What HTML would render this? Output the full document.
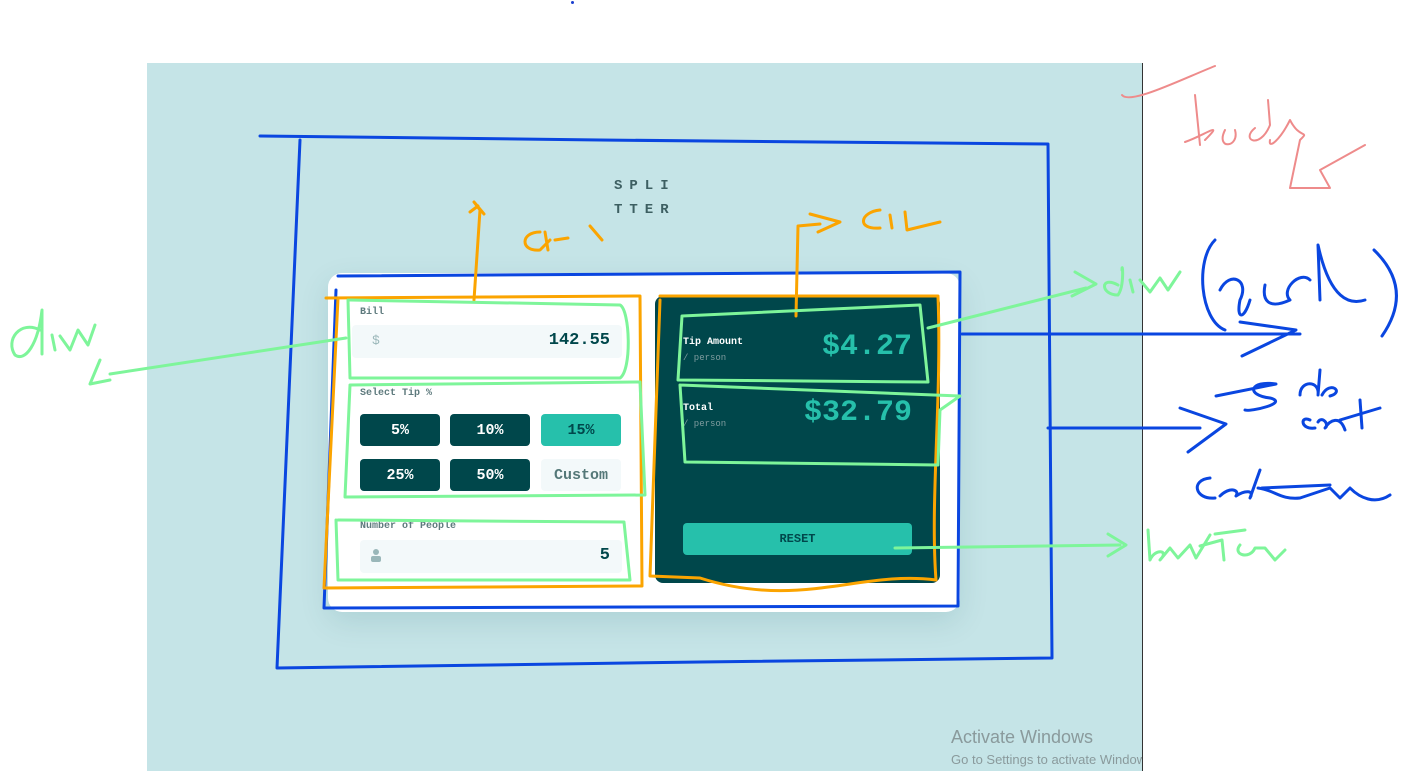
<!DOCTYPE html>
<html><head><meta charset="utf-8"><style>
*{margin:0;padding:0;box-sizing:border-box}
body{width:1405px;height:771px;background:#fff;position:relative;overflow:hidden;font-family:"Liberation Mono",monospace}
.a{position:absolute}
#bg{left:147px;top:63px;width:996px;height:708px;background:#c5e4e7;border-right:1px solid #333;overflow:hidden}
.lbl{font-size:10px;font-weight:bold;color:#5e7a7d}
.inp{background:#f3f9fa;border-radius:4px}
.btn{background:#00474b;color:#fff;border-radius:4px;font-size:15px;font-weight:bold;display:flex;align-items:center;justify-content:center;width:80px;height:32px}
.big{color:#26c0ab;font-weight:bold;font-family:"Liberation Mono",monospace;text-align:right}
</style></head><body>
<div class="a" style="left:571px;top:1px;width:3px;height:3px;background:#1a3fcf;border-radius:50%"></div>
<div id="bg" class="a">
 <div class="a" style="left:804px;top:664px;font-family:'Liberation Sans',sans-serif;font-size:18px;color:#8a9a9c;white-space:nowrap">Activate Windows</div>
 <div class="a" style="left:804px;top:689px;font-family:'Liberation Sans',sans-serif;font-size:13px;color:#8a9a9c;white-space:nowrap">Go to Settings to activate Windows.</div>
</div>
<div class="a" style="left:614px;top:174px;font-size:14px;font-weight:bold;color:#3d5f62;letter-spacing:7px;line-height:24px">SPLI<br>TTER</div>
<div class="a" style="left:328px;top:273px;width:632px;height:339px;background:#fff;border-radius:14px;box-shadow:0 10px 30px rgba(0,80,90,.12)"></div>
<div class="a lbl" style="left:360px;top:307px">Bill</div>
<div class="a inp" style="left:352px;top:325px;width:270px;height:33px"></div>
<div class="a" style="left:372px;top:333px;color:#9ab7b9;font-size:13px">$</div>
<div class="a" style="left:530px;top:331px;width:80px;text-align:right;color:#00474b;font-size:17px;font-weight:bold">142.55</div>
<div class="a lbl" style="left:360px;top:388px">Select Tip %</div>
<div class="a btn" style="left:360px;top:414px">5%</div>
<div class="a btn" style="left:450px;top:414px">10%</div>
<div class="a btn" style="left:541px;top:414px;background:#26c0ab;color:#00474b">15%</div>
<div class="a btn" style="left:360px;top:459px">25%</div>
<div class="a btn" style="left:450px;top:459px">50%</div>
<div class="a btn" style="left:541px;top:459px;background:#f3f9fa;color:#547878">Custom</div>
<div class="a lbl" style="left:360px;top:521px">Number of People</div>
<div class="a inp" style="left:360px;top:540px;width:262px;height:33px"></div>
<svg class="a" style="left:371px;top:549px" width="10" height="13"><circle cx="5" cy="3" r="3" fill="#9ab7b9"/><rect x="0" y="7" width="10" height="6" rx="2" fill="#9ab7b9"/></svg>
<div class="a" style="left:560px;top:546px;width:50px;text-align:right;color:#00474b;font-size:17px;font-weight:bold">5</div>
<div class="a" style="left:655px;top:296px;width:285px;height:287px;background:#00474b;border-radius:8px"></div>
<div class="a" style="left:683px;top:337px;color:#fff;font-size:10px;font-weight:bold">Tip Amount</div>
<div class="a" style="left:683px;top:353px;color:#7f9c9f;font-size:9px">/ person</div>
<div class="a big" style="left:760px;top:330px;width:152px;font-size:30px">$4.27</div>
<div class="a" style="left:683px;top:403px;color:#fff;font-size:10px;font-weight:bold">Total</div>
<div class="a" style="left:683px;top:419px;color:#7f9c9f;font-size:9px">/ person</div>
<div class="a big" style="left:740px;top:396px;width:172px;font-size:30px">$32.79</div>
<div class="a" style="left:683px;top:523px;width:229px;height:32px;background:#26c0ab;border-radius:4px;color:#00474b;font-size:12px;font-weight:bold;display:flex;align-items:center;justify-content:center">RESET</div>
<svg class="a" style="left:0;top:0" width="1405" height="771" fill="none" stroke-linecap="round" stroke-linejoin="round">
<g stroke="#0a46e0" stroke-width="3">
<path d="M260 136 L600 140 L1048 144 L1052 658 L700 662 L277 668 L300 140"/>
<path d="M338 276 L960 272 L958 606 L324 608 L336 290"/>
<path d="M962 334 L1300 334 M1240 322 L1296 330 L1242 356 M1048 428 L1200 428 M1180 408 L1226 424 L1188 452"/>
<path d="M1215 240 C1195 260 1200 320 1225 330 M1220 290 C1230 270 1250 280 1240 300 C1236 320 1244 320 1250 300 M1265 285 C1262 300 1268 310 1290 300 M1290 300 C1280 290 1300 270 1310 280 M1320 300 L1318 245 C1330 300 1350 305 1365 300 M1374 250 C1405 280 1400 310 1382 336"/>
<path d="M1216 396 L1276 384 C1250 380 1245 395 1270 398 C1290 403 1250 412 1245 410 M1300 395 C1300 380 1320 380 1318 395 L1320 370 M1322 395 C1330 380 1345 392 1330 396"/>
<path d="M1310 420 C1300 415 1300 430 1315 428 M1318 422 C1322 415 1330 425 1325 428 C1330 420 1340 415 1345 430 M1340 420 L1380 408 M1360 400 L1362 428"/>
<path d="M1210 478 C1190 480 1195 500 1215 498 M1220 496 C1230 486 1240 490 1236 496 C1245 490 1255 490 1250 498 L1260 470 M1258 488 C1275 490 1280 500 1300 498 L1330 488 L1340 498 L1350 488 C1360 498 1375 505 1390 495 M1262 488 L1330 485"/>
</g>
<g stroke="#fba400" stroke-width="3">
<path d="M326 298 L640 296 L642 586 L324 588 L338 298"/>
<path d="M660 296 L938 296 C942 400 930 500 936 580 C860 570 800 610 700 578 L650 576 L660 300"/>
<path d="M474 300 L480 210 L474 202 L484 214 M470 212 L478 206"/>
<path d="M540 232 C520 232 520 252 540 250 L550 240 M545 232 L548 250 M555 240 L568 238 M590 226 L602 240"/>
<path d="M796 316 L798 226 L820 224 M810 214 L840 222 L818 232 M880 210 C860 212 856 230 880 228 M890 215 L892 228 M905 212 L907 230 L940 222"/>
</g>
<g stroke="#7ef59a" stroke-width="3">
<path d="M350 300 L620 305 C630 310 632 370 620 378 L350 378 L348 300"/>
<path d="M350 385 L640 382 L645 495 L345 497 L350 385"/>
<path d="M338 520 L624 522 L630 580 L338 580 L336 520"/>
<path d="M682 316 L920 305 L928 382 L678 380 L682 316 M680 385 L960 396 L940 410 L938 465 L685 462 L680 385"/>
<path d="M346 338 L110 374 M100 360 L90 384 L110 380"/>
<path d="M928 328 L1086 288 M1075 272 L1096 284 L1072 296"/>
<path d="M895 548 L1120 545 M1108 534 L1126 545 L1108 556"/>
<path d="M40 330 C20 320 5 340 15 355 C25 362 38 345 42 310 L42 354 M52 335 L55 350 M60 336 L70 350 L78 330 L88 345 L95 325"/>
<path d="M1118 285 C1100 275 1100 295 1118 295 C1125 285 1122 260 1122 270 M1130 280 L1133 292 M1140 280 L1150 292 L1160 278 L1168 290 L1180 272"/>
<path d="M1148 530 L1150 560 C1155 548 1170 550 1160 560 L1170 548 L1178 558 L1190 545 L1196 558 L1210 535 M1200 546 L1222 540 L1224 560 M1215 534 L1245 530 M1240 545 C1232 555 1250 560 1255 548 L1265 548 L1275 560 L1285 550"/>
</g>
<g stroke="#ee8b8b" stroke-width="2">
<path d="M1122 95 C1130 105 1180 80 1215 66 M1195 95 L1200 145 M1185 142 C1205 135 1225 120 1205 140 M1225 130 C1215 150 1240 148 1235 130 M1255 128 C1240 140 1260 150 1270 125 L1268 100 M1270 140 C1268 150 1280 140 1290 120 C1300 140 1310 130 1300 140 L1290 188 L1330 188 L1320 170 L1365 145"/>
</g>
</svg>
</body></html>
